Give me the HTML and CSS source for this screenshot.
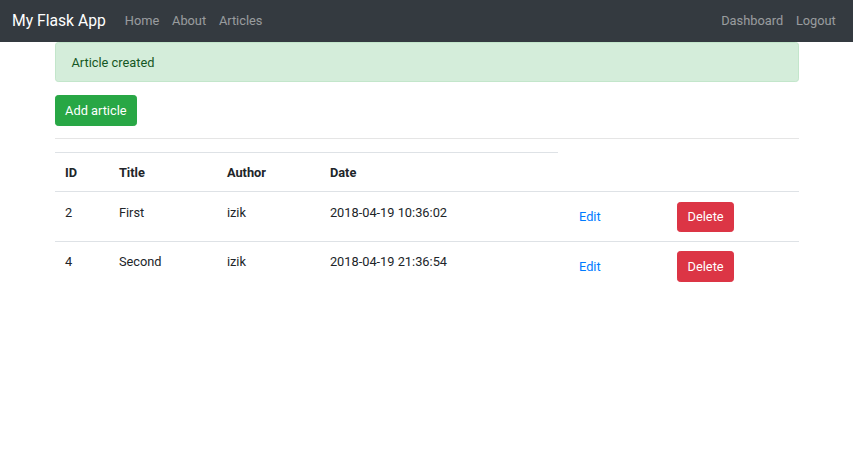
FILE: index.html
```html
<!DOCTYPE html>
<html lang="en">
<head>
<meta charset="utf-8">
<title>My Flask App</title>
<link rel="stylesheet" href="styles.css">
</head>
<body>
<nav class="navbar">
  <a class="brand" href="#">My Flask App</a>
  <ul class="nav">
    <li><a class="nav-link" href="#">Home</a></li>
    <li><a class="nav-link" href="#">About</a></li>
    <li><a class="nav-link" href="#">Articles</a></li>
  </ul>
  <ul class="nav nav-right">
    <li><a class="nav-link" href="#">Dashboard</a></li>
    <li><a class="nav-link" href="#">Logout</a></li>
  </ul>
</nav>
<div class="container">
  <div class="alert">Article created</div>
  <a class="btn btn-success" href="#">Add article</a>
  <hr class="rule">
  <table class="table">
    <colgroup>
      <col class="c-id"><col class="c-title"><col class="c-author"><col class="c-date"><col class="c-edit"><col class="c-del">
    </colgroup>
    <tr>
      <th>ID</th><th>Title</th><th>Author</th><th>Date</th>
    </tr>
    <tr>
      <td>2</td><td>First</td><td>izik</td><td>2018-04-19 10:36:02</td>
      <td><a class="btn btn-link" href="#">Edit</a></td>
      <td><button class="btn btn-danger" type="button">Delete</button></td>
    </tr>
    <tr>
      <td>4</td><td>Second</td><td>izik</td><td>2018-04-19 21:36:54</td>
      <td><a class="btn btn-link" href="#">Edit</a></td>
      <td><button class="btn btn-danger" type="button">Delete</button></td>
    </tr>
  </table>
</div>
</body>
</html>
```

FILE: styles.css
```css
html { font-size: 12.8px; }
* { box-sizing: border-box; }
body {
  margin: 0;
  font-family: Roboto, "Liberation Sans", sans-serif;
  font-size: 1rem;
  line-height: 1.5;
  color: #212529;
  background: #fff;
}
a { text-decoration: none; color: #007bff; }

.navbar {
  height: 42px;
  background: #343a40;
  display: flex;
  align-items: center;
  padding: 0 1rem 0 12px;
}
.brand {
  color: #fff;
  font-size: 15.7px;
  margin-right: 12.6px;
  line-height: 1.5;
}
.nav {
  list-style: none;
  margin: 0;
  padding: 0;
  display: flex;
}
.nav-right { margin-left: auto; margin-right: -2px; }
.nav-link {
  display: block;
  padding: .5rem;
  color: rgba(255,255,255,.5);
}

.container {
  width: 744px;
  margin: 0 auto;
}
.alert {
  padding: .75rem 1.25rem;
  margin-bottom: 1rem;
  border: 1px solid #c3e6cb;
  border-radius: .25rem;
  background: #d4edda;
  color: #155724;
}
.btn {
  display: inline-block;
  font-family: inherit;
  font-size: 1rem;
  line-height: 1.5;
  padding: .375rem .75rem;
  border: 1px solid transparent;
  border-radius: .25rem;
  font-weight: 400;
  vertical-align: middle;
  cursor: pointer;
}
.btn-success { background: #28a745; border-color: #28a745; color: #fff; }
.btn-danger { background: #dc3545; border-color: #dc3545; color: #fff; padding: .375rem 9.2px; }
.btn-link { background: transparent; color: #007bff; }

.rule {
  margin: 12px 0 13.5px;
  border: 0;
  border-top: 1px solid rgba(0,0,0,.1);
  height: 0;
}

.table {
  width: 100%;
  border-collapse: collapse;
  table-layout: fixed;
}
.c-id { width: 54px; }
.c-title { width: 108px; }
.c-author { width: 103px; }
.c-date { width: 238.5px; }
.c-edit { width: 109px; }
.c-del { width: 131.5px; }
.table th, .table td {
  padding: .75rem .75rem .75rem 10.4px;
  border-top: 1px solid #dee2e6;
  text-align: left;
  vertical-align: top;
}
.table th { font-weight: 700; padding-top: 9.5px; padding-bottom: 9px; }
.table td { padding-top: 10.5px; padding-bottom: 7.5px; }
.table td .btn { margin-top: -1px; margin-bottom: 1px; }
```
